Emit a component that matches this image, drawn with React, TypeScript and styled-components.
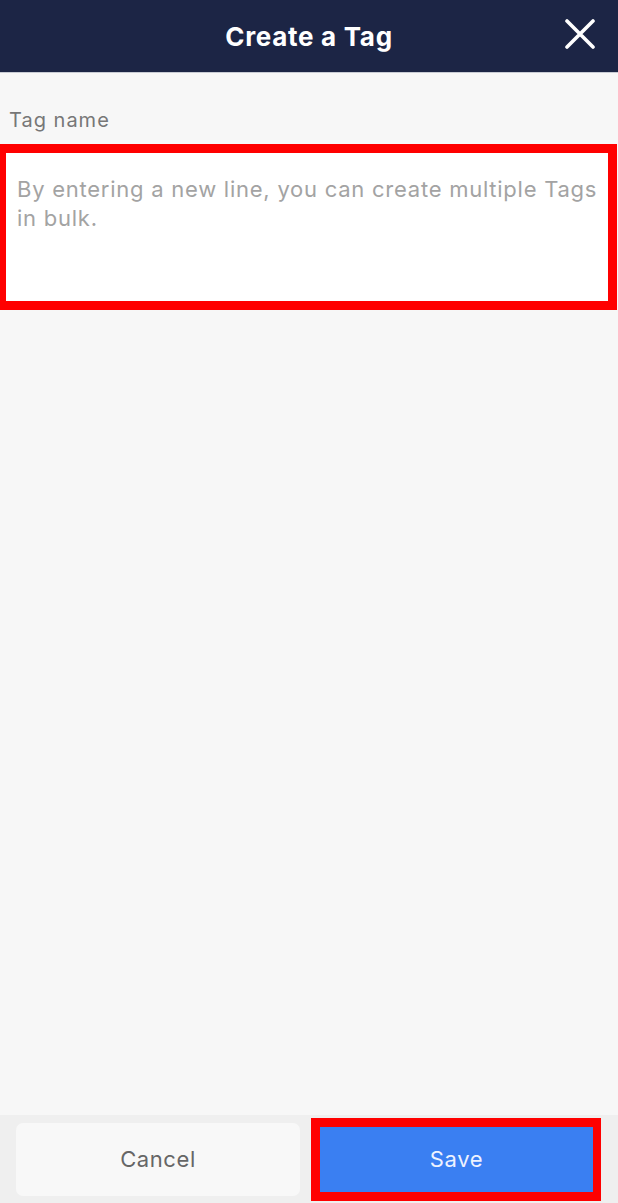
import React from "react";
import styled, { createGlobalStyle } from "styled-components";

const Global = createGlobalStyle`
  html, body { margin: 0; padding: 0; background: #f7f7f7; }
  * { box-sizing: border-box; }
  body { font-family: Inter, "Noto Sans", "Liberation Sans", sans-serif; }
`;

const Page = styled.div`
  display: flex;
  flex-direction: column;
  width: 618px;
  height: 1203px;
  background: #f7f7f7;
`;

const Header = styled.header`
  position: relative;
  flex: 0 0 73px;
  display: flex;
  align-items: center;
  justify-content: center;
  background: #1c2545;
  border-bottom: 1px solid #c9ccd4;
`;

const Title = styled.h1`
  margin: 0;
  font-size: 26px;
  font-weight: 700;
  color: #ffffff;
  letter-spacing: 0.7px;
`;

const CloseButton = styled.button`
  position: absolute;
  right: 22px;
  top: 18px;
  width: 32px;
  height: 32px;
  padding: 0;
  border: 0;
  background: transparent;
  display: flex;
  align-items: center;
  justify-content: center;
`;

const Content = styled.main`
  flex: 1;
  display: flex;
  flex-direction: column;
  padding-top: 35px;
`;

const Label = styled.label`
  display: block;
  padding-left: 9px;
  font-size: 20px;
  line-height: 24px;
  letter-spacing: 1px;
  color: #777777;
  margin-bottom: 12px;
`;

const TagInput = styled.textarea`
  display: block;
  width: 617px;
  height: 166px;
  margin: 0;
  border-style: solid;
  border-color: #ff0000;
  border-width: 9px 9px 9px 6px;
  background: #ffffff;
  padding: 22px 8px 0 11px;
  font-family: Inter, "Noto Sans", "Liberation Sans", sans-serif;
  font-size: 22px;
  line-height: 29px;
  letter-spacing: 0.75px;
  color: #333;
  resize: none;
  outline: none;
  &::placeholder {
    color: #a3a3a3;
    opacity: 1;
  }
`;

const Footer = styled.footer`
  flex: 0 0 88px;
  display: flex;
  align-items: center;
  gap: 11px;
  padding-left: 16px;
  background: #efefef;
`;

const Button = styled.button<{ $primary?: boolean }>`
  font-family: Inter, "Noto Sans", "Liberation Sans", sans-serif;
  font-size: 22px;
  letter-spacing: 0.6px;
  display: flex;
  align-items: center;
  justify-content: center;
  ${(p) =>
    p.$primary
      ? `
    width: 290px;
    height: 83px;
    background: #3a7ff2;
    color: #eef2ff;
    border: 9px solid #ff0000;
    border-width: 9px 8px 9px 9px;
    border-radius: 0;
  `
      : `
    width: 284px;
    height: 73px;
    background: #f8f8f8;
    color: #666666;
    border: 0;
    border-radius: 7px;
  `}
`;

export default function App() {
  return (
    <>
      <Global />
      <Page>
        <Header>
          <Title>Create a Tag</Title>
          <CloseButton aria-label="Close">
            <svg width="30" height="30" viewBox="0 0 30 30">
              <path
                d="M2 2 L28 28 M28 2 L2 28"
                stroke="#ffffff"
                strokeWidth="3.6"
                strokeLinecap="round"
                fill="none"
              />
            </svg>
          </CloseButton>
        </Header>
        <Content>
          <Label htmlFor="tag">Tag name</Label>
          <TagInput
            id="tag"
            placeholder="By entering a new line, you can create multiple Tags in bulk."
          />
        </Content>
        <Footer>
          <Button>Cancel</Button>
          <Button $primary>Save</Button>
        </Footer>
      </Page>
    </>
  );
}
